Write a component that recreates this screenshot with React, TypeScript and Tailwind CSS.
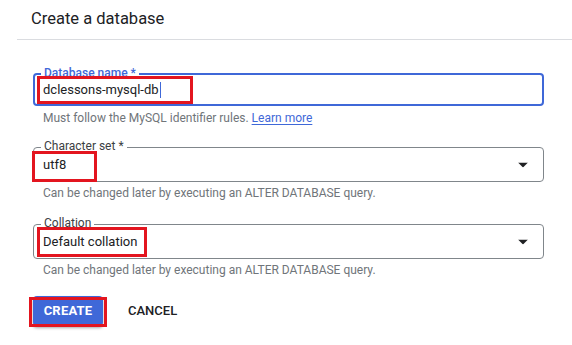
import React from "react";

const font = { fontFamily: "Roboto, 'Liberation Sans', sans-serif" };

function Caret() {
  return (
    <svg width="10" height="5" viewBox="0 0 10 5" className="absolute right-[15px] top-1/2 -translate-y-1/2">
      <path d="M0 0h10L5 5z" fill="#202124" />
    </svg>
  );
}

function Field({
  label,
  value,
  focused,
  select,
  mark,
}: {
  label: string;
  value: string;
  focused?: boolean;
  select?: boolean;
  mark: string;
}) {
  return (
    <div
      className={
        focused
          ? "relative h-[33px] rounded-[4px] border-2 border-[#3f68d8]"
          : "relative h-[35px] rounded-[4px] border border-[#80868b]"
      }
    >
      <span
        className={
          focused
            ? "absolute left-[6px] top-[-9px] bg-white px-[3px] text-[12px] leading-[14px] font-medium text-[#3f68d8]"
            : "absolute left-[7px] top-[-9px] bg-white px-[3px] text-[12px] leading-[14px] text-[#3c4043]"
        }
      >
        {label}
      </span>
      <div
        className={
          focused
            ? "flex h-full items-center pl-[8px] text-[13px] text-[#202124]"
            : "flex h-full items-center pl-[9px] text-[13px] text-[#202124]"
        }
      >
        {value}
        {focused ? <span className="ml-[1px] inline-block h-[16px] w-px bg-[#3f68d8]" /> : null}
      </div>
      {select ? <Caret /> : null}
      <div className={mark} />
    </div>
  );
}

export default function App() {
  return (
    <div className="h-[345px] w-[572px] overflow-hidden bg-white" style={font}>
      <div className="ml-[17px] flex h-[40px] items-center border-b border-[#dadce0] pl-[14px] text-[16.5px] text-[#202124]">
        Create a database
      </div>

      <div className="ml-[33px] mr-[28px] pt-[33px]">
        <Field
          label="Database name *"
          value="dclessons-mysql-db"
          focused
          mark="absolute left-[2px] top-[1px] h-[28px] w-[156px] border-[3px] border-[#e3151f]"
        />
        <p className="mt-[5px] pl-[10px] text-[12px] leading-[14px] text-[#70757a]">
          Must follow the MySQL identifier rules.{" "}
          <span className="text-[#3f68d8] underline underline-offset-2">Learn more</span>
        </p>

        <div className="mt-[22px]">
          <Field
            label="Character set *"
            value="utf8"
            select
            mark="absolute left-[-2px] top-[3px] h-[31px] w-[65px] border-[3px] border-[#e3151f]"
          />
        </div>
        <p className="mt-[4px] pl-[10px] text-[12px] leading-[14px] text-[#70757a]">
          Can be changed later by executing an ALTER DATABASE query.
        </p>

        <div className="mt-[24px]">
          <Field
            label="Collation"
            value="Default collation"
            select
            mark="absolute left-[3px] top-[2px] h-[30px] w-[110px] border-[3px] border-[#e3151f]"
          />
        </div>
        <p className="mt-[4px] pl-[10px] text-[12px] leading-[14px] text-[#70757a]">
          Can be changed later by executing an ALTER DATABASE query.
        </p>

        <div className="mt-[19px] flex items-center">
          <div className="relative">
            <button className="h-[30px] w-[70px] rounded-[4px] bg-[#3f68d8] text-[13px] font-bold tracking-[0.2px] text-white shadow-[0_2px_3px_rgba(0,0,0,0.35)]">
              CREATE
            </button>
            <div className="absolute left-[-4px] top-[1px] h-[30px] w-[78px] border-[3px] border-[#e3151f]" />
          </div>
          <span className="ml-[25px] text-[13px] font-medium text-[#202124]">CANCEL</span>
        </div>
      </div>
    </div>
  );
}
